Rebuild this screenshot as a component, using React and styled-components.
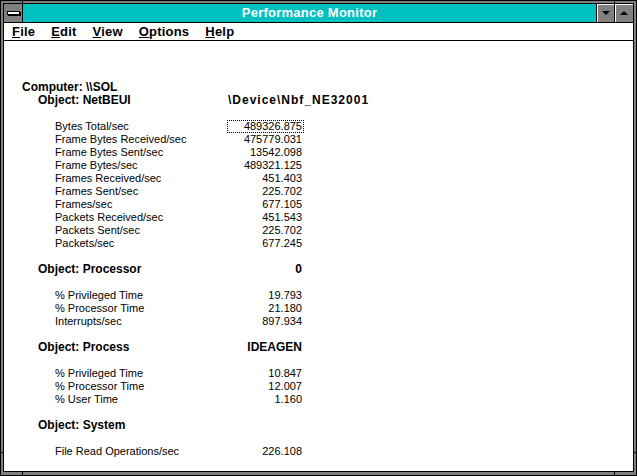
import React from 'react';
import styled, { createGlobalStyle } from 'styled-components';

const GlobalStyle = createGlobalStyle`
  html, body {
    margin: 0;
    padding: 0;
    background: #fff;
  }
  body {
    font-family: "Liberation Sans", Arial, sans-serif;
    color: #000;
  }
`;

const Window = styled.div`
  position: relative;
  width: 637px;
  height: 476px;
  box-sizing: border-box;
  background: #808080;
  border: 1px solid #000;
  padding: 2px 2px 3px 2px;
`;

const Inner = styled.div`
  height: 100%;
  box-sizing: border-box;
  border: 1px solid #000;
  background: #fff;
  display: flex;
  flex-direction: column;
`;

// little resize-corner marks across the frame
const Tick = styled.div`
  position: absolute;
  background: #000;
  ${(p) => (p.$vertical ? 'width: 1px; height: 3px;' : 'width: 3px; height: 1px;')}
`;

const TitleBar = styled.div`
  display: flex;
  height: 19px;
  box-sizing: border-box;
  border-bottom: 1px solid #000;
`;

const SysMenu = styled.div`
  width: 19px;
  box-sizing: border-box;
  border-right: 1px solid #000;
  background: #808080;
  display: flex;
  align-items: center;
  justify-content: center;
`;

const SysBar = styled.div`
  width: 11px;
  height: 2px;
  background: #fff;
  border: 1px solid #000;
  box-shadow: 1px 1px 0 #000;
`;

const Title = styled.div`
  flex: 1;
  background: #00c0c0;
  color: #fff;
  font-weight: bold;
  font-size: 13px;
  letter-spacing: 0.25px;
  display: flex;
  align-items: center;
  justify-content: center;
`;

const SizeButton = styled.div`
  width: ${(p) => p.$w}px;
  box-sizing: border-box;
  border-left: 1px solid #000;
  background: #808080;
  box-shadow: inset 1px 1px 0 #fff;
  display: flex;
  align-items: center;
  justify-content: center;
`;

const Arrow = styled.div`
  width: 0;
  height: 0;
  border-left: 4px solid transparent;
  border-right: 4px solid transparent;
  ${(p) => (p.$up ? 'border-bottom: 4px solid #000;' : 'border-top: 4px solid #000;')}
`;

const MenuBar = styled.div`
  display: flex;
  align-items: center;
  gap: 16px;
  height: 19px;
  box-sizing: border-box;
  padding-left: 8px;
  border-bottom: 1px solid #000;
  font-weight: bold;
  font-size: 13px;
  letter-spacing: 0.2px;
`;

const MenuItem = styled.span`
  u {
    text-decoration: underline;
    text-underline-offset: 1px;
  }
`;

const Content = styled.div`
  flex: 1;
  padding-top: 40px;
  font-size: 11px;
  line-height: 13px;
`;

const Section = styled.div`
  margin-bottom: 13px;
`;

const Counters = styled.div`
  margin-top: 13px;
`;

const Row = styled.div`
  display: flex;
  height: 13px;
  align-items: center;
`;

const Label = styled.div`
  width: 223px;
  box-sizing: border-box;
  padding-left: ${(p) => p.$indent}px;
  white-space: nowrap;
  font-weight: ${(p) => (p.$bold ? 'bold' : 'normal')};
  font-size: ${(p) => (p.$bold ? 12 : 11)}px;
`;

const Value = styled.div`
  width: 77px;
  height: 13px;
  box-sizing: border-box;
  padding: 0 2px 0 1px;
  white-space: nowrap;
  text-align: ${(p) => p.$align || 'right'};
  letter-spacing: ${(p) => (p.$align === 'left' ? '1px' : 'normal')};
  font-weight: ${(p) => (p.$bold ? 'bold' : 'normal')};
  font-size: ${(p) => (p.$bold ? 12 : 11)}px;
  outline: ${(p) => (p.$focused ? '1px dotted #000' : 'none')};
  outline-offset: -1px;
`;

const sections = [
  {
    object: 'NetBEUI',
    instance: '\\Device\\Nbf_NE32001',
    align: 'left',
    counters: [
      ['Bytes Total/sec', '489326.875'],
      ['Frame Bytes Received/sec', '475779.031'],
      ['Frame Bytes Sent/sec', '13542.098'],
      ['Frame Bytes/sec', '489321.125'],
      ['Frames Received/sec', '451.403'],
      ['Frames Sent/sec', '225.702'],
      ['Frames/sec', '677.105'],
      ['Packets Received/sec', '451.543'],
      ['Packets Sent/sec', '225.702'],
      ['Packets/sec', '677.245'],
    ],
  },
  {
    object: 'Processor',
    instance: '0',
    counters: [
      ['% Privileged Time', '19.793'],
      ['% Processor Time', '21.180'],
      ['Interrupts/sec', '897.934'],
    ],
  },
  {
    object: 'Process',
    instance: 'IDEAGEN',
    counters: [
      ['% Privileged Time', '10.847'],
      ['% Processor Time', '12.007'],
      ['% User Time', '1.160'],
    ],
  },
  {
    object: 'System',
    instance: '',
    counters: [['File Read Operations/sec', '226.108']],
  },
];

const menus = ['File', 'Edit', 'View', 'Options', 'Help'];

const App = () => {
  return (
    <>
      <GlobalStyle />
      <Window>
        <Tick $vertical style={{ left: 21, top: 0 }} />
        <Tick $vertical style={{ left: 613, top: 0 }} />
        <Tick $vertical style={{ left: 21, bottom: 0 }} />
        <Tick $vertical style={{ left: 613, bottom: 0 }} />
        <Tick style={{ left: 0, top: 451 }} />
        <Tick style={{ right: 0, top: 451 }} />
        <Inner>
          <TitleBar>
            <SysMenu>
              <SysBar />
            </SysMenu>
            <Title>Performance Monitor</Title>
            <SizeButton $w={18}>
              <Arrow />
            </SizeButton>
            <SizeButton $w={19}>
              <Arrow $up />
            </SizeButton>
          </TitleBar>

          <MenuBar>
            {menus.map((m) => (
              <MenuItem key={m}>
                <u>{m[0]}</u>
                {m.slice(1)}
              </MenuItem>
            ))}
          </MenuBar>

          <Content>
            <Row>
              <Label $bold $indent={18}>Computer: \\SOL</Label>
            </Row>
            {sections.map((s, si) => (
              <Section key={s.object}>
                <Row>
                  <Label $bold $indent={34}>Object: {s.object}</Label>
                  <Value $bold $align={s.align}>{s.instance}</Value>
                </Row>
                <Counters>
                  {s.counters.map(([name, val], ci) => (
                    <Row key={name}>
                      <Label $indent={51}>{name}</Label>
                      <Value $focused={si === 0 && ci === 0}>{val}</Value>
                    </Row>
                  ))}
                </Counters>
              </Section>
            ))}
          </Content>
        </Inner>
      </Window>
    </>
  );
};

export default App;
